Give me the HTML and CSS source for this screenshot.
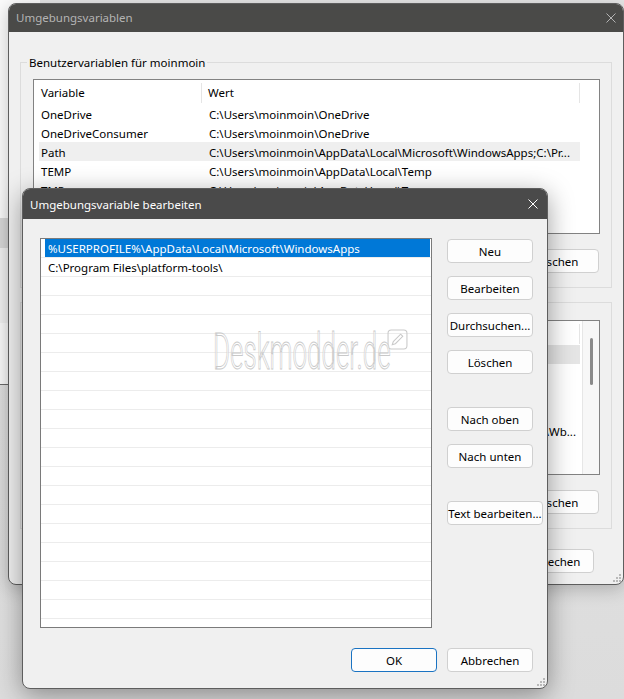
FILE: index.html
```html
<!DOCTYPE html>
<html lang="de">
<head>
    <meta charset="UTF-8">
    <meta name="viewport" content="width=device-width, initial-scale=1.0">
    <title>Umgebungsvariablen</title>
    <link rel="stylesheet" href="styles.css">
</head>
<body>
    <div class="desktop">
        <!-- Fenster dahinter, nur der Rand ist sichtbar -->
        <div class="side-window">
            <div class="side-row side-first">Metadata</div>
            <div class="side-row">Videoc</div>
            <div class="side-row">Fehler</div>
            <div class="side-band"></div>
            <div class="side-light"></div>
        </div>

        <div class="window main-window">
            <div class="titlebar titlebar-inactive">
                <span class="title">Umgebungsvariablen</span>
                <svg class="close" viewBox="0 0 10 10"><path d="M0.5 0.5L9.5 9.5M9.5 0.5L0.5 9.5"/></svg>
            </div>
            <div class="main-body">
                <div class="group">
                    <div class="group-label">Benutzervariablen für moinmoin</div>
                    <div class="var-table">
                        <div class="var-head">
                            <span class="head-name">Variable</span>
                            <span class="head-value">Wert</span>
                        </div>
                        <div class="var-row">
                            <span class="col-name">OneDrive</span>
                            <span class="col-value">C:\Users\moinmoin\OneDrive</span>
                        </div>
                        <div class="var-row">
                            <span class="col-name">OneDriveConsumer</span>
                            <span class="col-value">C:\Users\moinmoin\OneDrive</span>
                        </div>
                        <div class="var-row var-row-hover">
                            <span class="col-name">Path</span>
                            <span class="col-value">C:\Users\moinmoin\AppData\Local\Microsoft\WindowsApps;C:\Pr...</span>
                        </div>
                        <div class="var-row">
                            <span class="col-name">TEMP</span>
                            <span class="col-value">C:\Users\moinmoin\AppData\Local\Temp</span>
                        </div>
                        <div class="var-row">
                            <span class="col-name">TMP</span>
                            <span class="col-value">C:\Users\moinmoin\AppData\Local\Temp</span>
                        </div>
                    </div>
                    <div class="group-buttons">
                        <button class="btn">Löschen</button>
                    </div>
                </div>

                <div class="group group-system">
                    <div class="group-label">Systemvariablen</div>
                    <div class="var-table sys-table">
                        <div class="sys-rows">
                            <div class="var-head">
                                <span class="head-name">Variable</span>
                                <span class="head-value">Wert</span>
                            </div>
                            <div class="var-row var-row-hover">
                                <span class="col-name">ComSpec</span>
                                <span class="col-value">C:\WINDOWS\system32\cmd.exe</span>
                            </div>
                            <div class="var-row">
                                <span class="col-name">DriverData</span>
                                <span class="col-value">C:\Windows\System32\Drivers\DriverData</span>
                            </div>
                            <div class="var-row">
                                <span class="col-name">NUMBER_OF_PROCESSORS</span>
                                <span class="col-value">8</span>
                            </div>
                            <div class="var-row">
                                <span class="col-name">OS</span>
                                <span class="col-value">Windows_NT</span>
                            </div>
                            <div class="var-row">
                                <span class="col-name">Path</span>
                                <span class="col-value col-end">C:\WINDOWS\system32;C:\WINDOWS;C:\WINDOWS\System32\Wb...</span>
                            </div>
                            <div class="var-row">
                                <span class="col-name">PATHEXT</span>
                                <span class="col-value">.COM;.EXE;.BAT;.CMD;.VBS;.VBE;.JS;.JSE</span>
                            </div>
                        </div>
                        <div class="scrollbar"><div class="thumb"></div></div>
                    </div>
                    <div class="group-buttons">
                        <button class="btn">Löschen</button>
                    </div>
                </div>

                <div class="dialog-buttons main-buttons">
                    <button class="btn">OK</button>
                    <button class="btn">Abbrechen</button>
                </div>
            </div>
            <svg class="grip" viewBox="0 0 10 10"><path d="M8 2h2v2H8zM5 5h2v2H5zM8 5h2v2H8zM2 8h2v2H2zM5 8h2v2H5zM8 8h2v2H8z"/></svg>
        </div>

        <div class="window edit-dialog">
            <div class="titlebar">
                <span class="title">Umgebungsvariable bearbeiten</span>
                <svg class="close" viewBox="0 0 10 10"><path d="M0.5 0.5L9.5 9.5M9.5 0.5L0.5 9.5"/></svg>
            </div>
            <div class="edit-body">
                <div class="edit-main">
                    <div class="path-list">
                        <div class="path-row selected"><div class="path-text">%USERPROFILE%\AppData\Local\Microsoft\WindowsApps</div></div>
                        <div class="path-row"><div class="path-text">C:\Program Files\platform-tools\</div></div>
                        <div class="path-row"></div>
                        <div class="path-row"></div>
                        <div class="path-row"></div>
                        <div class="path-row"></div>
                        <div class="path-row"></div>
                        <div class="path-row"></div>
                        <div class="path-row"></div>
                        <div class="path-row"></div>
                        <div class="path-row"></div>
                        <div class="path-row"></div>
                        <div class="path-row"></div>
                        <div class="path-row"></div>
                        <div class="path-row"></div>
                        <div class="path-row"></div>
                        <div class="path-row"></div>
                        <div class="path-row"></div>
                        <div class="path-row"></div>
                        <div class="path-row"></div>
                        <div class="path-row"></div>
                    </div>
                    <div class="edit-buttons">
                        <button class="btn">Neu</button>
                        <button class="btn">Bearbeiten</button>
                        <button class="btn">Durchsuchen...</button>
                        <button class="btn">Löschen</button>
                        <button class="btn btn-spaced">Nach oben</button>
                        <button class="btn">Nach unten</button>
                        <button class="btn btn-spaced btn-wide">Text bearbeiten...</button>
                    </div>
                </div>
                <div class="dialog-buttons edit-buttons-row">
                    <button class="btn btn-default">OK</button>
                    <button class="btn">Abbrechen</button>
                </div>
            </div>
            <svg class="grip" viewBox="0 0 10 10"><path d="M8 2h2v2H8zM5 5h2v2H5zM8 5h2v2H8zM2 8h2v2H2zM5 8h2v2H5zM8 8h2v2H8z"/></svg>

            <!-- Wasserzeichen -->
            <div class="watermark">
                <span class="watermark-text">Deskmodder.de</span>
                <svg class="watermark-pen" viewBox="0 0 20 20"><rect x="1" y="1" width="18" height="18" rx="3"/><path d="M5 15l1-3 7-7 2 2-7 7z"/></svg>
            </div>
        </div>
    </div>
</body>
</html>
```

FILE: styles.css
```css
* {
    margin: 0;
    padding: 0;
    box-sizing: border-box;
}

body {
    width: 624px;
    height: 699px;
    overflow: hidden;
    background: #e2e2e2;
    font-family: "Noto Sans", "Open Sans", sans-serif;
    font-size: 11.5px;
    color: #000;
}

.desktop {
    position: relative;
    width: 624px;
    height: 699px;
    overflow: hidden;
    background: linear-gradient(180deg, #e6e6e6 0%, #dcdcdc 100%);
}

/* ---------- Fenster dahinter ---------- */

.side-window {
    position: absolute;
    left: -120px;
    top: 0;
    width: 160px;
    height: 385px;
    background: #fbfbfb;
    border-bottom: 1px solid #6a6a6a;
    padding-top: 80px;
}

.side-row {
    height: 34px;
    line-height: 16px;
    padding-left: 66px;
    white-space: nowrap;
}

.side-first {
    height: 70px;
}

.side-band {
    height: 30px;
    background: #d9d9d9;
}

.side-light {
    height: 75px;
    background: #f2f2f2;
}

/* ---------- Fenster allgemein ---------- */

.window {
    position: absolute;
    background: #f0f0f0;
    border: 1px solid #5e5e5e;
    border-radius: 8px;
    overflow: hidden;
    display: flex;
    flex-direction: column;
}

.titlebar {
    display: flex;
    align-items: center;
    background: #4a4a4a;
    color: #fff;
    padding-left: 7px;
    flex-shrink: 0;
}

.titlebar-inactive {
    background: #4a4a48;
    color: #b4b4b4;
}

.title {
    font-size: 11.5px;
    white-space: nowrap;
}

.close {
    width: 10px;
    height: 10px;
    margin-left: auto;
    fill: none;
    stroke: currentColor;
    stroke-width: 1;
}

.grip {
    position: absolute;
    right: 2px;
    bottom: 2px;
    width: 10px;
    height: 10px;
    fill: #b9b9b9;
}

.btn {
    width: 86px;
    height: 24px;
    background: #fdfdfd;
    border: 1px solid #d0d0d0;
    border-radius: 4px;
    font-family: inherit;
    font-size: 11.5px;
    color: #000;
    white-space: nowrap;
    padding: 1px 0 0;
}

.btn-default {
    border-color: #1a73c2;
}

/* ---------- Umgebungsvariablen ---------- */

.main-window {
    left: 8px;
    top: 3px;
    width: 616px;
    height: 582px;
    box-shadow: 0 4px 18px rgba(0, 0, 0, 0.22);
}

.main-window .titlebar {
    height: 28px;
    padding-bottom: 1px;
}

.main-window .close {
    margin-right: 7px;
}

.main-body {
    padding: 30px 11px 0 11px;
}

.group {
    border: 1px solid #dcdcdc;
    padding: 0 11px 14px 12px;
}

.group-system {
    margin-top: 14px;
}

.group-label {
    width: fit-content;
    margin: -9px 0 0 -6px;
    padding: 1px 2px 0;
    height: 16px;
    line-height: 16px;
    background: #f0f0f0;
}

.var-table {
    margin-top: 9px;
    height: 155px;
    background: #fff;
    border: 1px solid #828282;
    overflow: hidden;
}

.sys-table {
    margin-top: 10px;
    display: flex;
}

.sys-rows {
    flex: 1;
    overflow: hidden;
}

.var-head {
    display: flex;
    height: 24px;
    align-items: center;
    padding-top: 1px;
}

.head-name {
    width: 168px;
    padding-left: 7px;
    line-height: 20px;
    border-right: 1px solid #e5e5e5;
}

.head-value {
    width: 378px;
    padding-left: 6px;
    line-height: 20px;
    border-right: 1px solid #e5e5e5;
}

.var-row {
    display: flex;
    width: 541px;
    height: 19px;
    line-height: 19px;
    padding-top: 1px;
    margin-left: 5px;
    white-space: nowrap;
}

.var-row-hover {
    background: #efefef;
}

.sys-table .var-row-hover {
    background: #e5e5e5;
}

.col-name {
    width: 163px;
    padding-left: 2px;
    overflow: hidden;
}

.col-value {
    width: 378px;
    padding-left: 7px;
    overflow: hidden;
}

.col-end {
    display: flex;
    justify-content: flex-end;
    padding-right: 4px;
}

.scrollbar {
    width: 17px;
    border-left: 1px solid #e6e6e6;
    background: #f7f7f7;
    padding: 17px 0 0 7px;
}

.thumb {
    width: 3px;
    height: 47px;
    border-radius: 2px;
    background: #8a8a8a;
}

.group-buttons {
    display: flex;
    justify-content: flex-end;
    margin-top: 15px;
    padding-right: 1px;
}

.dialog-buttons {
    display: flex;
    justify-content: flex-end;
    gap: 10px;
    margin-top: 20px;
}

.main-buttons {
    padding-right: 18px;
}

/* ---------- Umgebungsvariable bearbeiten ---------- */

.edit-dialog {
    left: 22px;
    top: 188px;
    width: 526px;
    height: 501px;
    box-shadow: 0 6px 26px rgba(0, 0, 0, 0.38);
}

.edit-dialog .titlebar {
    height: 30px;
}

.edit-dialog .close {
    margin-right: 9px;
}

.edit-body {
    padding: 19px 3px 16px 17px;
}

.edit-main {
    display: flex;
    gap: 15px;
}

.path-list {
    flex-shrink: 0;
    width: 392px;
    height: 390px;
    background: #fff;
    border: 1px solid #7a7a7a;
    overflow: hidden;
}

.path-row {
    height: 19px;
    border-bottom: 1px solid #ececec;
    padding-left: 4px;
    padding-right: 1px;
}

.path-text {
    height: 18px;
    line-height: 18px;
    padding: 1px 0 0 3px;
    white-space: nowrap;
    overflow: hidden;
}

.selected .path-text {
    background: #0078d7;
    color: #fff;
}

.edit-buttons {
    display: flex;
    flex-direction: column;
    align-items: flex-start;
    gap: 13px;
    padding-top: 1px;
}

.btn-spaced {
    margin-top: 20px;
}

.btn-wide {
    width: 96px;
}

.edit-buttons-row {
    padding-right: 11px;
}

.watermark {
    position: absolute;
    left: 190px;
    top: 140px;
    display: flex;
    align-items: flex-start;
    pointer-events: none;
}

.watermark-text {
    display: inline-block;
    width: 176px;
    font-family: Roboto, sans-serif;
    font-weight: 300;
    font-size: 50px;
    line-height: 46px;
    color: rgba(255, 255, 255, 0.6);
    -webkit-text-stroke: 1px #c9c9c9;
    transform: scaleX(0.52);
    transform-origin: left top;
    white-space: nowrap;
}

.watermark-pen {
    width: 21px;
    height: 21px;
    margin-left: -2px;
    fill: none;
    stroke: #c9c9c9;
    stroke-width: 1;
}
```
